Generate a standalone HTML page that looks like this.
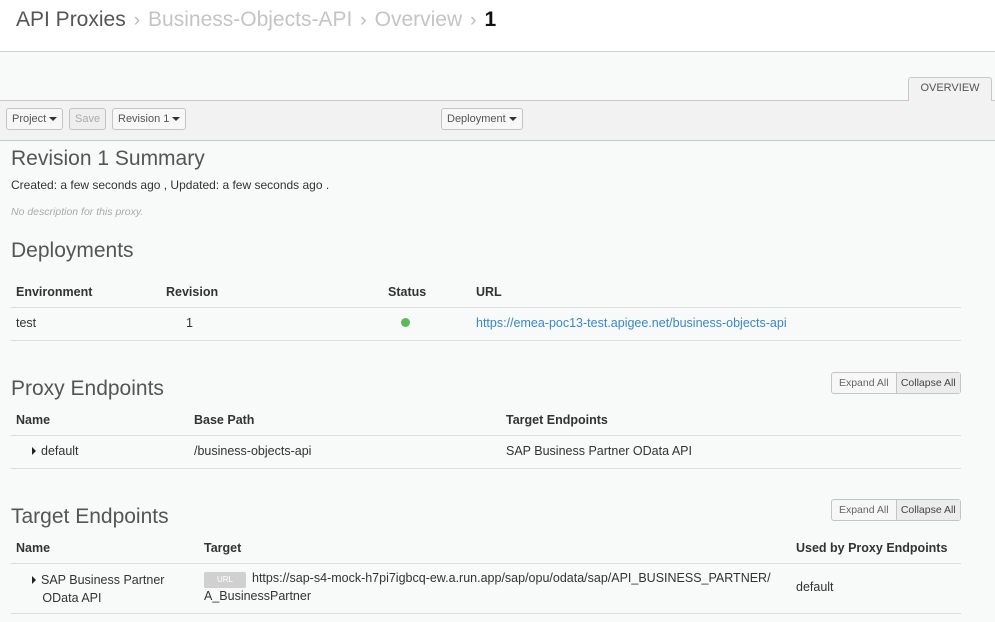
<!DOCTYPE html>
<html><head><meta charset="utf-8"><style>
*{margin:0;padding:0;box-sizing:border-box}
body{width:995px;height:622px;overflow:hidden;background:#f8f9f9;font-family:"Liberation Sans",sans-serif;color:#333;position:relative}
.a{position:absolute;white-space:nowrap}
.hdr{left:0;top:0;width:995px;height:52px;background:#fff;border-bottom:1px solid #d0d0d0}
.bc{left:16px;top:8px;font-size:21px;color:#555}
.bc .g{color:#c4c4c4}.bc .s{color:#bbb;font-size:19px;margin:0 8px}
.tb{left:0;top:100px;width:995px;height:41px;background:#f2f2f2;border-top:1px solid #c8c8c8;border-bottom:1px solid #c8c8c8}
.btn{position:absolute;top:108px;height:22px;border:1px solid #c4c4c4;border-radius:3px;background:#f7f7f7;font-size:11px;color:#555;line-height:20px;padding:0 5px}
.car{display:inline-block;width:0;height:0;border-left:4px solid transparent;border-right:4px solid transparent;border-top:4px solid #333;vertical-align:middle;margin-left:3px}
.tab{left:908px;top:77px;width:84px;height:24px;background:#f2f2f2;border:1px solid #c8c8c8;border-bottom:none;border-radius:3px 3px 0 0;font-size:11px;color:#555;text-align:center;line-height:21px}
h2{position:absolute;font-weight:normal;font-size:21px;color:#555;left:11px;white-space:nowrap}
.t{font-size:12.5px}
.b{font-weight:bold}
.ln{position:absolute;left:11px;width:950px;height:1px;background:#ddd}
.eb{position:absolute;left:831px;width:130px;height:22px;border:1px solid #c4c4c4;border-radius:3px;font-size:10.5px;color:#666;display:flex;background:#f7f7f7}
.eb span{flex:1;text-align:center;line-height:20px}
.eb span+span{border-left:1px solid #c4c4c4;background:#ececec;color:#444}
.tri{display:inline-block;border-top:4px solid transparent;border-bottom:4px solid transparent;border-left:4px solid #222;margin-right:5px;vertical-align:0}
</style></head><body>
<div class="a hdr"></div>
<div class="a bc">API Proxies<span class="s">›</span><span class="g">Business-Objects-API</span><span class="s">›</span><span class="g">Overview</span><span class="s">›</span><span style="color:#111;font-weight:bold">1</span></div>
<div class="a tb"></div>
<div class="a tab">OVERVIEW</div>
<div class="btn" style="left:6px">Project<span class="car"></span></div>
<div class="btn" style="left:69px;color:#aaa;background:#eee">Save</div>
<div class="btn" style="left:112px">Revision 1<span class="car"></span></div>
<div class="btn" style="left:441px">Deployment<span class="car"></span></div>

<h2 style="top:147px">Revision 1 Summary</h2>
<div class="a t" style="left:11px;top:178px;font-size:12px">Created: a few seconds ago , Updated: a few seconds ago .</div>
<div class="a" style="left:11px;top:206px;font-size:10.5px;font-style:italic;color:#aaa">No description for this proxy.</div>

<h2 style="top:239px">Deployments</h2>
<div class="a t b" style="left:16px;top:285px">Environment</div>
<div class="a t b" style="left:166px;top:285px">Revision</div>
<div class="a t b" style="left:388px;top:285px">Status</div>
<div class="a t b" style="left:476px;top:285px">URL</div>
<div class="ln" style="top:307px"></div>
<div class="a t" style="left:16px;top:316px">test</div>
<div class="a t" style="left:186px;top:316px">1</div>
<div class="a" style="left:401px;top:318px;width:9px;height:9px;border-radius:50%;background:#5cb85c"></div>
<div class="a t" style="left:476px;top:316px;color:#3a87c8">https://emea-poc13-test.apigee.net/business-objects-api</div>
<div class="ln" style="top:340px"></div>

<h2 style="top:377px">Proxy Endpoints</h2>
<div class="eb" style="top:372px"><span>Expand All</span><span>Collapse All</span></div>
<div class="a t b" style="left:16px;top:413px">Name</div>
<div class="a t b" style="left:194px;top:413px">Base Path</div>
<div class="a t b" style="left:506px;top:413px">Target Endpoints</div>
<div class="ln" style="top:435px"></div>
<div class="a t" style="left:32px;top:444px"><span class="tri"></span>default</div>
<div class="a t" style="left:194px;top:444px">/business-objects-api</div>
<div class="a t" style="left:506px;top:444px">SAP Business Partner OData API</div>
<div class="ln" style="top:468px"></div>

<h2 style="top:505px">Target Endpoints</h2>
<div class="eb" style="top:499px"><span>Expand All</span><span>Collapse All</span></div>
<div class="a t b" style="left:16px;top:541px">Name</div>
<div class="a t b" style="left:204px;top:541px">Target</div>
<div class="a t b" style="left:796px;top:541px">Used by Proxy Endpoints</div>
<div class="ln" style="top:563px"></div>
<div class="a t" style="left:32px;top:571px;line-height:18px"><span class="tri"></span>SAP Business Partner<br>&nbsp;&nbsp;&nbsp;OData API</div>
<div class="a" style="left:204px;top:572px;width:42px;height:16px;background:#d0d0d0;border-radius:2px;color:#fff;font-size:8px;text-align:center;line-height:16px">URL</div>
<div class="a t" style="left:252px;top:571px">https://sap-s4-mock-h7pi7igbcq-ew.a.run.app/sap/opu/odata/sap/API_BUSINESS_PARTNER/</div>
<div class="a t" style="left:204px;top:589px">A_BusinessPartner</div>
<div class="a t" style="left:796px;top:580px">default</div>
<div class="ln" style="top:613px"></div>
</body></html>
